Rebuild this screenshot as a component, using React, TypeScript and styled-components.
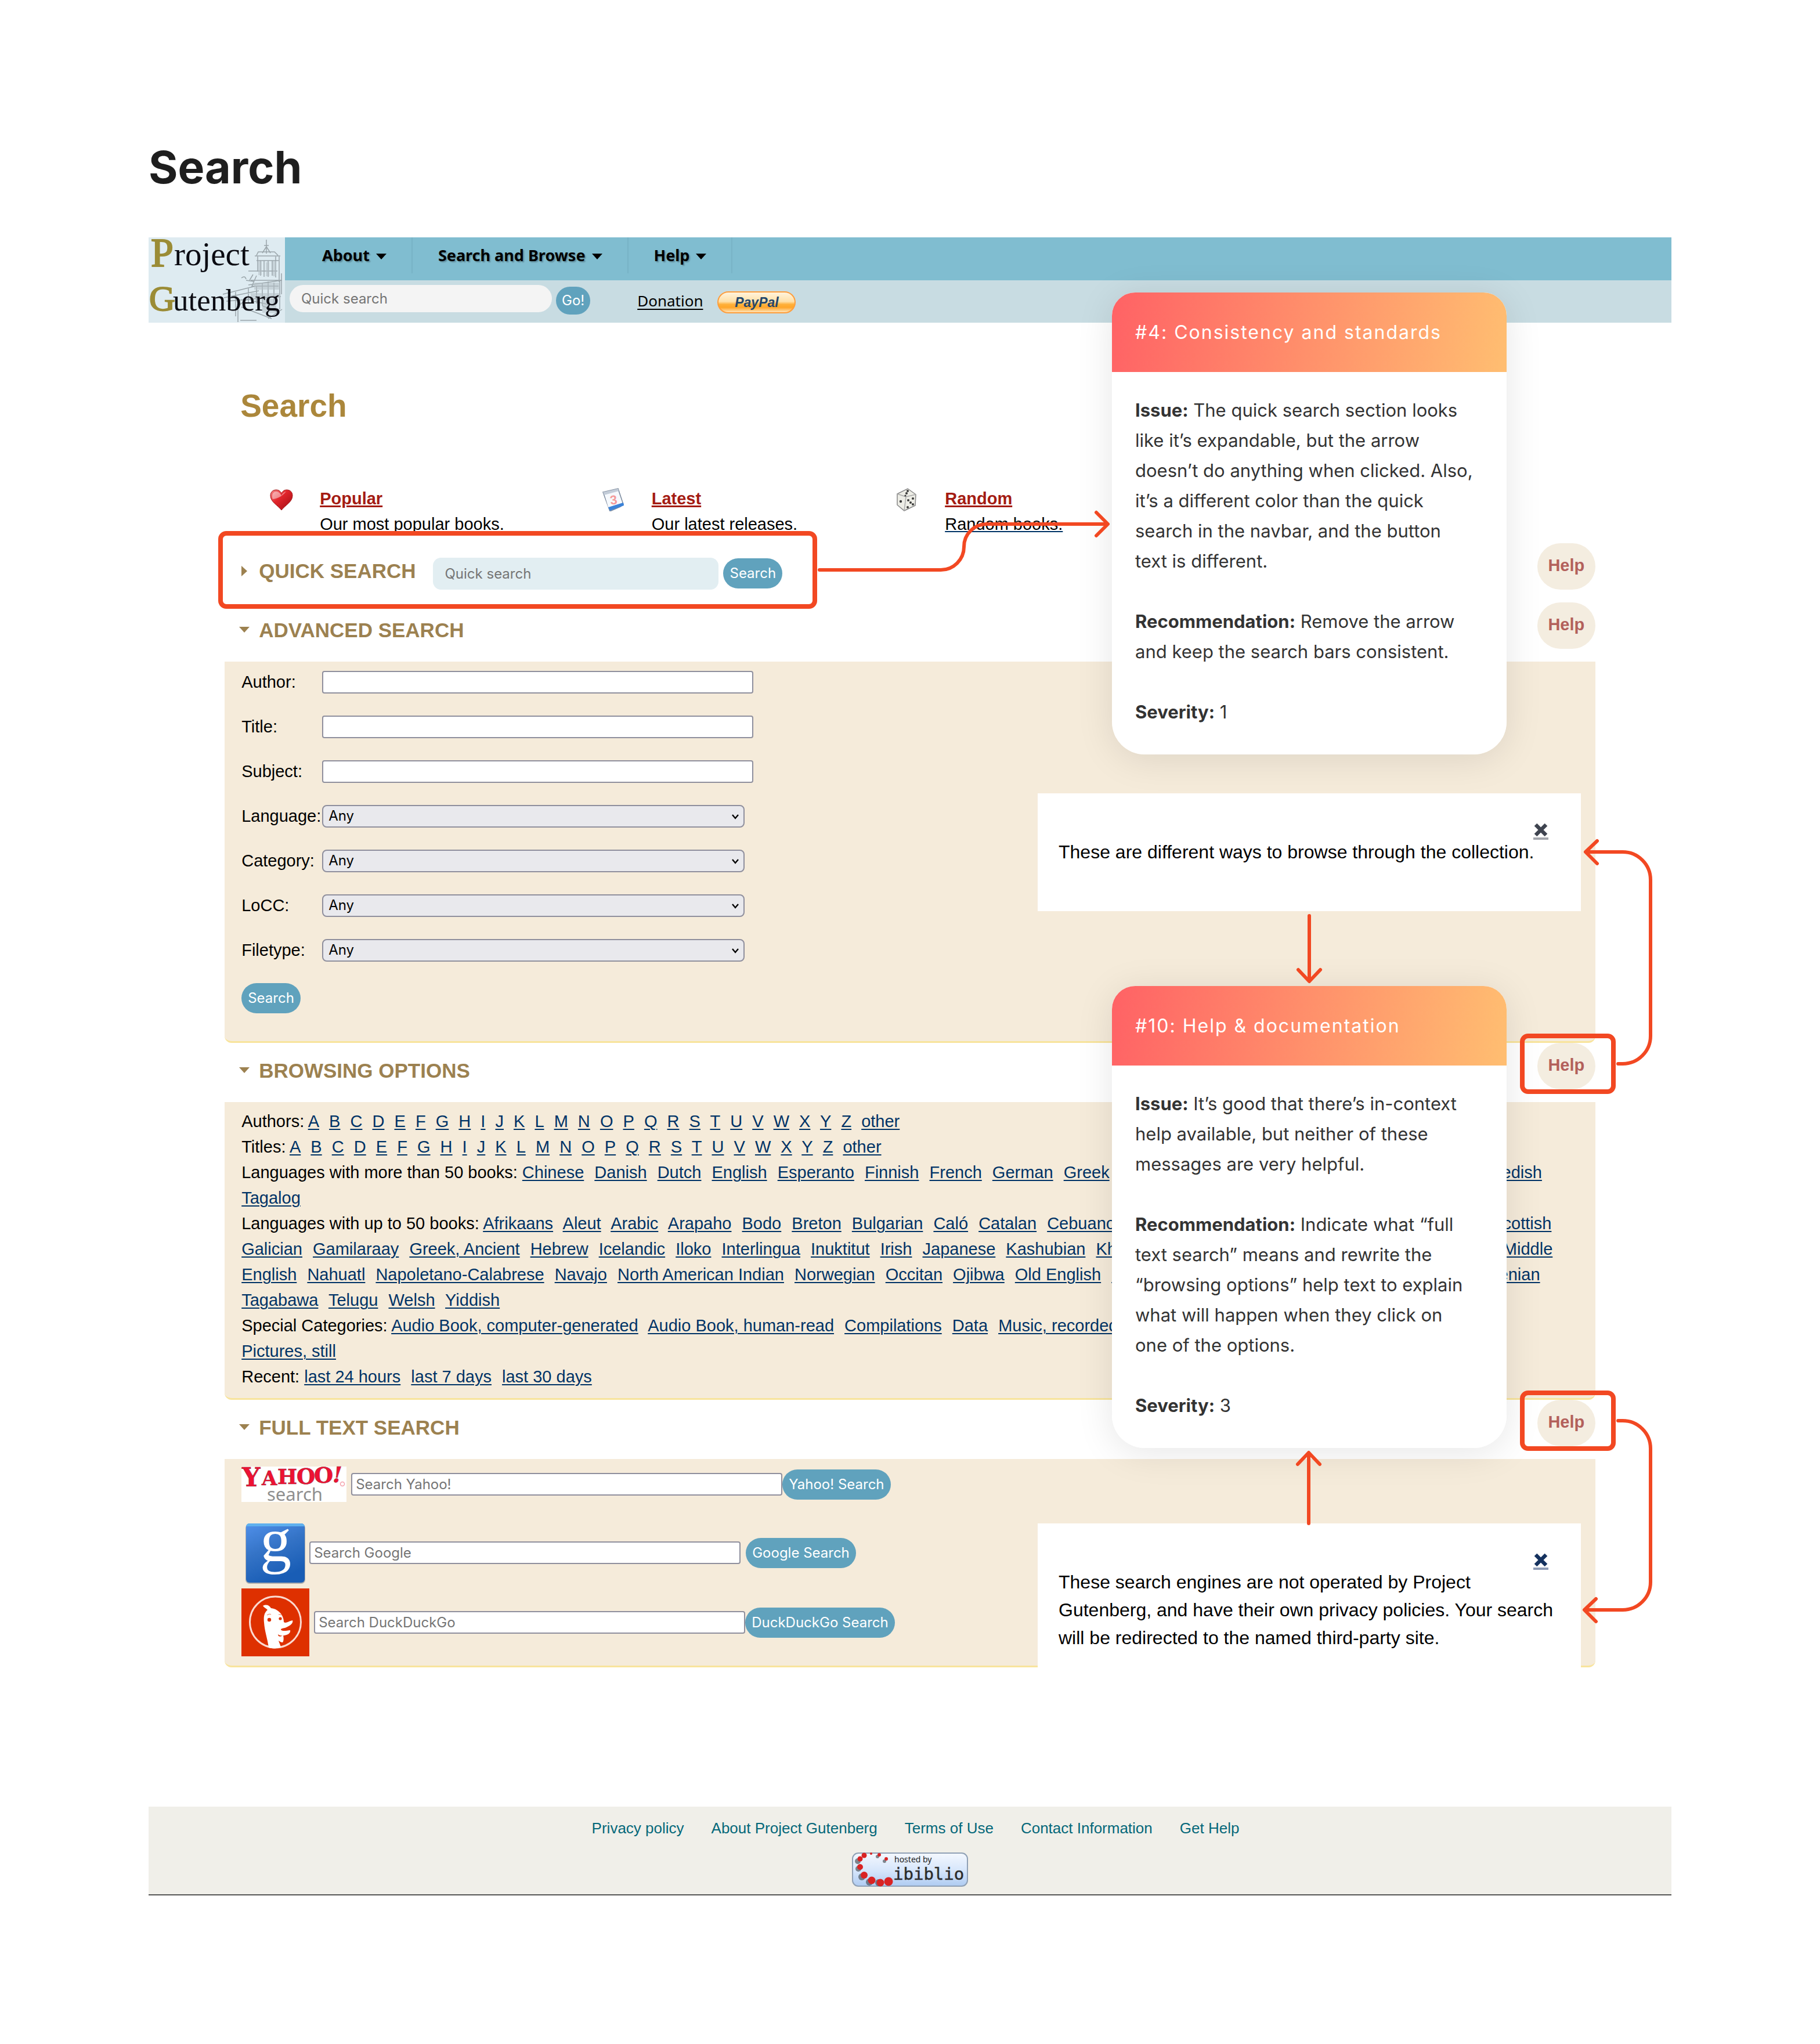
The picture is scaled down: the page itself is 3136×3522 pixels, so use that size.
import React from "react";
import styled, { createGlobalStyle } from "styled-components";

const sans = `"Liberation Sans", Arial, Helvetica, sans-serif`;
const ui = `Inter, "Helvetica Neue", sans-serif`;
const humanist = `"Noto Sans", "Open Sans", sans-serif`;

const RED = "#f24822";
const TEAL = "#60a2bd";
const CREAM = "#f5ebda";
const NAVY = "#003366";

const GlobalStyle = createGlobalStyle`
  *, *::before, *::after { box-sizing: border-box; }
  body { margin: 0; background: #ffffff; }
  button, input, select { font: inherit; margin: 0; }
`;

/* ---------- page ---------- */

const Canvas = styled.main`
  position: relative;
  padding: 240px 256px 256px;
  font-family: ${sans};
  font-size: 29px;
  line-height: 44px;
  color: #000;
`;

const BoardTitle = styled.h1`
  margin: 0 0 73px;
  font-family: ${ui};
  font-size: 77px;
  line-height: 96px;
  font-weight: 700;
  color: #1e1e1e;
`;

/* ---------- site header ---------- */

const SiteHeader = styled.header`
  display: flex;
  height: 147px;
  background: #c8dce2;
`;

const LogoLink = styled.a`
  flex: none;
  display: block;
  width: 235px;
  background: #deebf1;
  svg { display: block; overflow: visible; }
`;

const HeaderMain = styled.div`
  flex: 1;
  display: flex;
  flex-direction: column;
`;

const NavBar = styled.nav`
  display: flex;
  align-items: flex-start;
  height: 74px;
  padding-left: 20px;
  background: #80bdd0;
`;

const NavItem = styled.button`
  display: flex;
  align-items: center;
  gap: 11px;
  height: 62px;
  padding: 0 43px 0 44px;
  border: 0;
  border-right: 2px solid #78b3c6;
  background: none;
  font-family: ${humanist};
  font-size: 27px;
  font-weight: 700;
  color: #000;
  text-shadow: 2px 2px 2px rgba(0, 0, 0, 0.25);
`;

const Caret = styled.span`
  border: 9px solid transparent;
  border-top: 10px solid #000;
  border-bottom: 0;
  margin-top: 4px;
`;

const HeaderTools = styled.div`
  flex: 1;
  display: flex;
  align-items: flex-start;
  padding: 8px;
`;

const HeaderSearch = styled.form`
  display: flex;
  gap: 7px;
  margin-right: 81px;
`;

const PlainInput = styled.input<{ $w: number; $h: number; $bg: string; $r: number }>`
  width: ${(p) => p.$w}px;
  height: ${(p) => p.$h}px;
  padding: 0 20px;
  border: 0;
  border-radius: ${(p) => p.$r}px;
  background: ${(p) => p.$bg};
  font-family: ${ui};
  font-size: 24px;
  color: #222;
  &::placeholder { color: #757575; opacity: 1; }
`;

const PillButton = styled.button`
  flex: none;
  height: 52px;
  padding: 0 11px;
  border: 0;
  border-radius: 26px;
  background: ${TEAL};
  font-family: ${ui};
  font-size: 24px;
  line-height: 28px;
  color: #fff;
`;

const GoButton = styled(PillButton)`
  height: 48px;
  margin-top: 3px;
  padding: 0 10px;
`;

const Donation = styled.a`
  margin: 5px 25px 0 0;
  font-family: ${humanist};
  font-size: 26px;
  color: #000;
  text-underline-offset: 4px;
`;

const PayPalButton = styled.button`
  width: 135px;
  height: 38px;
  margin-top: 11px;
  border: 2px solid #ff9d3c;
  border-radius: 19px;
  background: linear-gradient(#fff3dc 0%, #ffe0a8 46%, #ffb03a 60%, #ffa62a 76%, #ffe3b8 100%);
  font-family: ${sans};
  font-size: 23px;
  line-height: 32px;
  font-weight: 700;
  font-style: italic;
  color: #23466b;
  padding: 0;
`;

/* ---------- content ---------- */

const Content = styled.div`
  margin: 0 5%;
`;

const SiteTitle = styled.h2`
  margin: 111px 0 106px;
  padding-left: 27px;
  font-size: 55px;
  line-height: 64px;
  font-weight: 700;
  color: #ab873b;
`;

const Shelf = styled.ul`
  display: flex;
  gap: 168px;
  margin: 0 0 11px;
  padding: 0 0 0 78px;
  list-style: none;
`;

const ShelfItem = styled.li`
  display: flex;
  gap: 46px;
  svg { flex: none; margin-top: 4px; }
`;

const ShelfLink = styled.a`
  color: #000;
  text-decoration: none;
`;

const ShelfName = styled.span`
  display: block;
  font-weight: 700;
  color: #a41b12;
  text-decoration: underline;
  text-decoration-thickness: 3px;
`;

const ShelfNote = styled.span`
  display: block;
  text-decoration: underline;
  text-decoration-color: ${NAVY};
`;

const SectionBar = styled.div`
  display: flex;
  align-items: center;
  height: 102px;
  padding: 0 0 6px 25px;
`;

const SectionTitle = styled.h3`
  display: flex;
  align-items: center;
  gap: 16px;
  margin: 0;
  font-size: 35px;
  line-height: 44px;
  font-weight: 700;
  color: #9c8150;
  text-transform: uppercase;
  white-space: nowrap;
`;

const QuickForm = styled.form`
  display: flex;
  align-items: center;
  gap: 8px;
  margin: 8px 0 0 30px;
`;

const HelpButton = styled.button`
  align-self: flex-start;
  width: 100px;
  height: 80px;
  margin-left: auto;
  padding: 0 0 4px;
  border: 0;
  border-radius: 40px;
  background: #f4ede0;
  font-size: 29px;
  font-weight: 700;
  color: #b3605b;
`;

const Panel = styled.div<{ $pad: string }>`
  padding: ${(p) => p.$pad};
  background: ${CREAM};
  border-bottom: 3px solid #f8e49c;
  border-radius: 0 0 12px 12px;
`;

const FieldList = styled.div`
  display: grid;
  gap: 38px;
  margin-bottom: 40px;
`;

const FieldRow = styled.div`
  display: grid;
  grid-template-columns: 139px 1fr;
  align-items: center;
  height: 39px;
  white-space: nowrap;
`;

const BoxInput = styled.input`
  width: 743px;
  height: 39px;
  padding: 0 6px;
  border: 2px solid #8f8f9d;
  border-radius: 4px;
  background: #fff;
  font-family: ${ui};
  font-size: 24px;
  line-height: 32px;
  &::placeholder { color: #757575; opacity: 1; }
`;

const SelectWrap = styled.div`
  position: relative;
  width: 728px;
  svg { position: absolute; right: 10px; top: 15px; pointer-events: none; }
`;

const SelectBox = styled.select`
  display: block;
  appearance: none;
  width: 100%;
  height: 39px;
  padding: 0 9px;
  border: 2px solid #8f8f9d;
  border-radius: 8px;
  background: #e9e9ed;
  font-family: ${ui};
  font-size: 24px;
  line-height: 32px;
  color: #000;
`;

const BrowseLine = styled.p`
  margin: 0;
`;

const BrowseLink = styled.a<{ $gap: number }>`
  margin-right: ${(p) => p.$gap}px;
  color: ${NAVY};
  text-decoration-thickness: 2px;
  text-underline-offset: 3px;
`;

const EngineRow = styled.form<{ $h: number; $after: number }>`
  display: flex;
  align-items: center;
  height: ${(p) => p.$h}px;
  margin-bottom: ${(p) => p.$after}px;
`;

const EngineLogo = styled.span<{ $gap: number }>`
  flex: none;
  display: block;
  margin-right: ${(p) => p.$gap}px;
  svg { display: block; overflow: visible; }
`;

const EngineSubmit = styled(PillButton)<{ $gap: number }>`
  margin-left: ${(p) => p.$gap}px;
`;

/* ---------- footer ---------- */

const Footer = styled.footer`
  display: flex;
  flex-direction: column;
  align-items: center;
  gap: 26px;
  margin-top: 240px;
  padding: 21px 0 13px;
  background: #f0efe9;
  border-bottom: 2px solid #555;
`;

const FooterNav = styled.nav`
  display: flex;
  gap: 47px;
  padding-left: 19px;
  line-height: 32px;
`;

const FooterLink = styled.a`
  font-size: 26px;
  color: #05687a;
  text-decoration: none;
`;

const Badge = styled.a`
  display: block;
  svg { display: block; }
`;

/* ---------- annotations ---------- */

const Note = styled.article<{ $top: number }>`
  position: absolute;
  right: 540px;
  top: ${(p) => p.$top}px;
  width: 680px;
  overflow: hidden;
  border-radius: 40px 40px 56px 56px;
  background: #fff;
  font-family: ${ui};
  font-size: 31px;
  line-height: 52px;
  color: #333;
`;

const NoteShadow = styled.div<{ $top: number }>`
  position: absolute;
  right: 540px;
  top: ${(p) => p.$top}px;
  width: 680px;
  height: 796px;
  border-radius: 40px 40px 56px 56px;
  box-shadow: 0 8px 64px rgba(0, 0, 0, 0.1);
`;

const NoteHead = styled.h4`
  margin: 0;
  padding: 43px 40px 42px;
  background: linear-gradient(98deg, #ff6265 0%, #ffbe71 100%);
  font-size: 32px;
  line-height: 52px;
  font-weight: 400;
  letter-spacing: 2px;
  color: #fff;
`;

const NoteBody = styled.div`
  display: grid;
  gap: 52px;
  padding: 40px 54px 47px 40px;
  p { margin: 0; }
`;

const Popup = styled.aside<{ $top: number; $h: number }>`
  position: absolute;
  left: 1788px;
  top: ${(p) => p.$top}px;
  width: 936px;
  height: ${(p) => p.$h}px;
  padding: 43px 36px 30px;
  background: #fff;
  font-size: 32px;
  line-height: 48px;
  p { margin: 0; }
`;

const CloseButton = styled.button<{ $color: string; $line: string }>`
  display: block;
  width: 26px;
  height: 37px;
  margin: 0 20px -3px auto;
  padding: 0;
  border: 0;
  border-bottom: 4px solid ${(p) => p.$line};
  background: none;
  color: ${(p) => p.$color};
  svg { display: block; margin-top: 6px; }
`;

const Highlight = styled.div<{ $x: number; $y: number; $w: number; $h: number }>`
  position: absolute;
  left: ${(p) => p.$x}px;
  top: ${(p) => p.$y}px;
  width: ${(p) => p.$w}px;
  height: ${(p) => p.$h}px;
  border: 8px solid ${RED};
  border-radius: 14px;
  pointer-events: none;
`;

const Arrows = styled.svg`
  position: absolute;
  left: 0;
  top: 0;
  width: 100%;
  height: 100%;
  pointer-events: none;
`;

/* ---------- drawings ---------- */

const GutenbergLogo = () => (
  <svg width="235" height="147" viewBox="0 0 235 147" role="img" aria-label="Project Gutenberg">
    <g fill="none" stroke="#9aa5aa" strokeWidth="1.5">
      <path d="M203 4v24M199 14h8M196 27l7-11 7 11M186 31l3-6h28l6 6M183 32h44M186 40h38M188 33v26M193 40v26M199 40v28M206 40v28M213 40v26M219 33v36M225 33v44M229 62v36" />
      <path d="M172 58h50M180 64l-6 10M176 74h52M186 66l-8 18h46M160 70q6-5 8 2M168 74l14 2M172 82l58-8M186 84v30M196 78v40M206 76v42M216 78v40M226 74v50" />
      <path d="M128 98l56-14M130 104l60-12M134 110l94-8M150 92v44M172 88v26M182 110l34 8M196 118l30 12M160 120l52 20M154 146v-28M154 118l20-14M206 140l24-16M158 143h28" />
    </g>
    <g fill="#b4bfc4" opacity="0.55">
      <path d="M189 41h6v24h-6zM202 43h6v24h-6zM214 41h6v26h-6zM182 78h44v12h-44zM176 96h50v8h-50zM196 106h24v24h-24z" />
    </g>
    <g fontFamily='"Liberation Serif", "Times New Roman", serif'>
      <text x="4" y="50" fontSize="70" fill="#9b8c36" stroke="#9b8c36" strokeWidth="2">P</text>
      <text x="44" y="48" fontSize="57" fill="#0b0b12">roject</text>
      <text x="1" y="126" fontSize="62" fill="#9b8c36" stroke="#9b8c36" strokeWidth="2">G</text>
      <text x="42" y="126" fontSize="53" fill="#0b0b12">utenberg</text>
    </g>
  </svg>
);

const HeartIcon = () => (
  <svg width="40" height="40" viewBox="0 0 40 40" aria-hidden="true">
    <defs>
      <linearGradient id="heart" x1="0" y1="0" x2="1" y2="1">
        <stop offset="0" stopColor="#f58a8a" />
        <stop offset="0.4" stopColor="#e3262c" />
        <stop offset="1" stopColor="#9c0a10" />
      </linearGradient>
    </defs>
    <path d="M20 38C14 30 1 24 1 13 1 7 5 3 11 3c4 0 7 2 9 6 2-4 5-6 9-6 6 0 10 4 10 10 0 11-13 17-19 25z" fill="url(#heart)" stroke="#a31c1c" strokeWidth="1" />
    <path d="M4 14c0-5 3-8 7-8 4 0 7 3 9 7 2-4 4-6 8-7-6 7-13 12-23 13-1-2-1-3-1-5z" fill="#fff" opacity="0.45" />
  </svg>
);

const CalendarIcon = () => (
  <svg width="40" height="40" viewBox="0 0 40 40" aria-hidden="true">
    <path d="M2 7L28 1l9 27-5 4-18 8z" fill="#e9f1fa" stroke="#7b899c" strokeWidth="1.5" />
    <path d="M2 7L28 1l1 4L4 12z" fill="#c3ccd8" />
    <path d="M11 33l26-8 1 5-24 9z" fill="#3b82d8" />
    <path d="M5 12l23-6 7 19-24 8z" fill="#f6f9fd" />
    <text x="14" y="28" fontFamily={sans} fontSize="22" fontWeight="700" fill="#f39a9a" transform="rotate(-8 20 20)">3</text>
  </svg>
);

const DiceIcon = () => (
  <svg width="40" height="40" viewBox="0 0 40 40" aria-hidden="true">
    <path d="M22 1l14 10-1 19-19 9L4 29 4 10z" fill="#ededE6" stroke="#878787" strokeWidth="1.5" />
    <path d="M4 10l15 5 17-4M19 15l-3 24" fill="none" stroke="#a9a9a9" strokeWidth="1.5" />
    <g fill="#3b3b3b">
      <circle cx="22" cy="5" r="2" /><circle cx="20" cy="9" r="2" /><circle cx="18" cy="13" r="1.6" />
      <circle cx="10" cy="23" r="2.2" />
      <circle cx="23" cy="21" r="2" /><circle cx="31" cy="18" r="2" /><circle cx="27" cy="25" r="2" />
      <circle cx="22" cy="33" r="2" /><circle cx="31" cy="28" r="2" />
    </g>
  </svg>
);

const Marker = ({ open }: { open: boolean }) => (
  <svg width="18" height="18" viewBox="0 0 18 18" aria-hidden="true">
    <path d={open ? "M0 3h18l-9 10z" : "M4 0v18l10-9z"} fill="currentColor" />
  </svg>
);

const Chevron = () => (
  <svg width="12" height="10" viewBox="0 0 12 10" aria-hidden="true">
    <path d="M1 2l5 6 5-6" fill="none" stroke="#000" strokeWidth="2.4" />
  </svg>
);

const Cross = () => (
  <svg width="26" height="24" viewBox="0 0 26 24" aria-hidden="true">
    <path d="M4 3l18 18M22 3L4 21" stroke="currentColor" strokeWidth="6.5" />
  </svg>
);

const YahooLogo = () => (
  <svg width="181" height="61" viewBox="0 0 181 61" role="img" aria-label="Yahoo! search">
    <rect width="181" height="61" fill="#fff" />
    <g fontFamily='"DejaVu Serif", "Liberation Serif", serif' fontWeight="700" fill="#ee1133" stroke="#a02a3a" strokeWidth="0.6">
      <text x="1" y="34" fontSize="44">Y</text>
      <text x="35" y="32" fontSize="34">A</text>
      <text x="62" y="30" fontSize="36">H</text>
      <text x="95" y="30" fontSize="37">O</text>
      <text x="125" y="28" fontSize="38">O</text>
      <text x="157" y="27" fontSize="38" fontStyle="italic">!</text>
    </g>
    <circle cx="174" cy="30" r="3.5" fill="none" stroke="#f5a0aa" strokeWidth="1.5" />
    <text x="44" y="59" fontFamily={humanist} fontSize="31" fill="#8f8f8f">search</text>
  </svg>
);

const GoogleLogo = () => (
  <svg width="117" height="117" viewBox="0 0 117 117" role="img" aria-label="Google">
    <defs>
      <linearGradient id="goog" x1="0" y1="0" x2="0.4" y2="1">
        <stop offset="0" stopColor="#5090ea" />
        <stop offset="0.5" stopColor="#3473c6" />
        <stop offset="1" stopColor="#195db5" />
      </linearGradient>
    </defs>
    <rect x="7" y="9" width="103" height="103" rx="7" fill="#7b848f" opacity="0.6" />
    <rect x="8" y="8" width="101" height="102" rx="6" fill="url(#goog)" />
    <path d="M14 8h89q5 0 6 5H8q1-5 6-5z" fill="#5fb0ee" />
    <text x="32" y="73" fontFamily='"Liberation Serif", "Times New Roman", serif' fontSize="108" fill="#fff">g</text>
  </svg>
);

const DuckLogo = () => (
  <svg width="117" height="117" viewBox="0 0 117 117" role="img" aria-label="DuckDuckGo">
    <rect width="117" height="117" fill="#de3000" />
    <circle cx="58.500" cy="58" r="44" fill="none" stroke="#fbd9cf" strokeWidth="3" />
    <path d="M37 30c6-3 11-1 14 4 8 1 14 5 18 11 3 5 4 9 4 13 4 3 9-2 15-3 2 5-5 10-13 13-4 1-7 1-7 3 1 3 9 2 16 1 1 5-4 8-10 9-5 1-9 0-11-2 0 4 3 5 9 2 1 4 1 10-1 12-3 0-5-2-7-3 1 4 3 7 4 11-7 3-15 3-21 1-2-15-7-28-8-43-1-10 0-17 6-22-3-3-6-4-8-7z" fill="#fff" />
    <circle cx="48" cy="54" r="3.200" fill="#de3000" />
    <circle cx="67" cy="52" r="2.600" fill="#de3000" />
    <path d="M44 46q4-3 7-1M64 45q3-1 5 1" fill="none" stroke="#f0a08c" strokeWidth="1.500" />
  </svg>
);

const IbiblioBadge = () => (
  <svg width="200" height="59" viewBox="0 0 200 59" role="img" aria-label="hosted by ibiblio">
    <defs>
      <linearGradient id="ibib" x1="0" y1="0" x2="0" y2="1">
        <stop offset="0" stopColor="#f4f8fe" />
        <stop offset="0.55" stopColor="#d5e5fb" />
        <stop offset="1" stopColor="#aecbf1" />
      </linearGradient>
    </defs>
    <rect x="1" y="1" width="198" height="57" rx="10" fill="url(#ibib)" stroke="#8fa0b5" strokeWidth="2" />
    <g fill="#3a3f45" opacity="0.6">
      <circle cx="10" cy="15" r="5" /><circle cx="11" cy="28" r="5" /><circle cx="17" cy="42" r="6" />
      <circle cx="30" cy="51" r="6" /><circle cx="46" cy="52" r="6" /><circle cx="56" cy="15" r="3" /><circle cx="44" cy="7" r="3" />
    </g>
    <g fill="#d92323">
      <circle cx="21" cy="5" r="4.500" /><circle cx="14" cy="11" r="4.500" /><circle cx="14" cy="25" r="5" />
      <circle cx="21" cy="39" r="6" /><circle cx="34" cy="48" r="6.500" /><circle cx="49" cy="52" r="6.500" />
      <circle cx="63" cy="50" r="7.500" /><circle cx="59" cy="11" r="3" /><circle cx="47" cy="4" r="3" /><circle cx="33" cy="2" r="2" />
    </g>
    <text x="73" y="17" fontFamily={humanist} fontSize="14" fill="#222">hosted by</text>
    <text x="71" y="47" fontFamily='"DejaVu Sans Mono", "Liberation Mono", monospace' fontSize="29" fill="#2b2b2b" stroke="#2b2b2b" strokeWidth="0.500">ibiblio</text>
  </svg>
);

/* ---------- data ---------- */

const letters = [..."ABCDEFGHIJKLMNOPQRSTUVWXYZ", "other"];

const browse: { label: string; links: string[]; gap: number }[] = [
  { label: "Authors:", links: letters, gap: 9 },
  { label: "Titles:", links: letters, gap: 9 },
  {
    label: "Languages with more than 50 books:",
    gap: 10,
    links: ["Chinese", "Danish", "Dutch", "English", "Esperanto", "Finnish", "French", "German", "Greek", "Hungarian", "Italian", "Latin", "Portuguese", "Spanish", "Swedish", "Tagalog"],
  },
  {
    label: "Languages with up to 50 books:",
    gap: 10,
    links: ["Afrikaans", "Aleut", "Arabic", "Arapaho", "Bodo", "Breton", "Bulgarian", "Caló", "Catalan", "Cebuano", "Czech", "Estonian", "Farsi", "Frisian", "Friulian", "Gaelic, Scottish", "Galician", "Gamilaraay", "Greek, Ancient", "Hebrew", "Icelandic", "Iloko", "Interlingua", "Inuktitut", "Irish", "Japanese", "Kashubian", "Khasi", "Korean", "Lithuanian", "Maori", "Mayan Languages", "Middle English", "Nahuatl", "Napoletano-Calabrese", "Navajo", "North American Indian", "Norwegian", "Occitan", "Ojibwa", "Old English", "Polish", "Romanian", "Russian", "Sanskrit", "Serbian", "Slovenian", "Tagabawa", "Telugu", "Welsh", "Yiddish"],
  },
  {
    label: "Special Categories:",
    gap: 10,
    links: ["Audio Book, computer-generated", "Audio Book, human-read", "Compilations", "Data", "Music, recorded", "Music, Sheet", "Other recordings", "Pictures, moving", "Pictures, still"],
  },
  { label: "Recent:", links: ["last 24 hours", "last 7 days", "last 30 days"], gap: 10 },
];

const shelf = [
  { name: "Popular", note: "Our most popular books.", icon: <HeartIcon /> },
  { name: "Latest", note: "Our latest releases.", icon: <CalendarIcon /> },
  { name: "Random", note: "Random books.", icon: <DiceIcon /> },
];

const engines = [
  { name: "Yahoo!", logo: <YahooLogo />, h: 61, after: 29, logoGap: 8, gap: 0 },
  { name: "Google", logo: <GoogleLogo />, h: 117, after: 3, logoGap: 0, gap: 9 },
  { name: "DuckDuckGo", logo: <DuckLogo />, h: 117, after: 0, logoGap: 8, gap: 0 },
];

const stay = (e: React.FormEvent) => e.preventDefault();

const Section = ({ title, open, children }: { title: string; open: boolean; children?: React.ReactNode }) => (
  <SectionBar>
    <SectionTitle>
      <Marker open={open} />
      {title}
    </SectionTitle>
    {children}
    <HelpButton type="button">Help</HelpButton>
  </SectionBar>
);

export default function App() {
  return (
    <>
      <GlobalStyle />
      <Canvas>
        <BoardTitle>Search</BoardTitle>

        <SiteHeader>
          <LogoLink href="#home"><GutenbergLogo /></LogoLink>
          <HeaderMain>
            <NavBar>
              {["About", "Search and Browse", "Help"].map((item) => (
                <NavItem key={item} type="button">{item}<Caret /></NavItem>
              ))}
            </NavBar>
            <HeaderTools>
              <HeaderSearch onSubmit={stay}>
                <PlainInput $w={452} $h={47} $r={24} $bg="#f4f4f4" aria-label="Site quick search" placeholder="Quick search" />
                <GoButton>Go!</GoButton>
              </HeaderSearch>
              <Donation href="#donate">Donation</Donation>
              <PayPalButton type="button">PayPal</PayPalButton>
            </HeaderTools>
          </HeaderMain>
        </SiteHeader>

        <Content>
          <SiteTitle>Search</SiteTitle>
          <Shelf>
            {shelf.map((s) => (
              <ShelfItem key={s.name}>
                {s.icon}
                <ShelfLink href={`#${s.name.toLowerCase()}`}>
                  <ShelfName>{s.name}</ShelfName>
                  <ShelfNote>{s.note}</ShelfNote>
                </ShelfLink>
              </ShelfItem>
            ))}
          </Shelf>

          <Section title="Quick Search" open={false}>
            <QuickForm onSubmit={stay}>
              <PlainInput $w={492} $h={55} $r={14} $bg="#e2eef2" aria-label="Quick search" placeholder="Quick search" />
              <PillButton>Search</PillButton>
            </QuickForm>
          </Section>

          <Section title="Advanced Search" open />
          <Panel $pad="13px 29px 48px">
            <form onSubmit={stay}>
              <FieldList>
                {["Author", "Title", "Subject"].map((f) => (
                  <FieldRow key={f}>
                    <label htmlFor={f}>{f}:</label>
                    <BoxInput id={f} />
                  </FieldRow>
                ))}
                {["Language", "Category", "LoCC", "Filetype"].map((f) => (
                  <FieldRow key={f}>
                    <label htmlFor={f}>{f}:</label>
                    <SelectWrap>
                      <SelectBox id={f}><option>Any</option></SelectBox>
                      <Chevron />
                    </SelectWrap>
                  </FieldRow>
                ))}
              </FieldList>
              <PillButton>Search</PillButton>
            </form>
          </Panel>

          <Section title="Browsing Options" open />
          <Panel $pad="11px 56px 15px 29px">
            {browse.map((b) => (
              <BrowseLine key={b.label}>
                {b.label}{" "}
                {b.links.map((l) => (
                  <React.Fragment key={l}>
                    <BrowseLink $gap={b.gap} href="#browse">{l}</BrowseLink>{" "}
                  </React.Fragment>
                ))}
              </BrowseLine>
            ))}
          </Panel>

          <Section title="Full Text Search" open />
          <Panel $pad="13px 29px 16px">
            {engines.map((e) => (
              <EngineRow key={e.name} $h={e.h} $after={e.after} onSubmit={stay}>
                <EngineLogo $gap={e.logoGap}>{e.logo}</EngineLogo>
                <BoxInput aria-label={`Search ${e.name}`} placeholder={`Search ${e.name}`} />
                <EngineSubmit $gap={e.gap}>{e.name} Search</EngineSubmit>
              </EngineRow>
            ))}
          </Panel>
        </Content>

        <Footer>
          <FooterNav>
            {["Privacy policy", "About Project Gutenberg", "Terms of Use", "Contact Information", "Get Help"].map((l) => (
              <FooterLink key={l} href="#footer">{l}</FooterLink>
            ))}
          </FooterNav>
          <Badge href="#ibiblio"><IbiblioBadge /></Badge>
        </Footer>

        <NoteShadow $top={504} />
        <NoteShadow $top={1699} />

        <Popup $top={1367} $h={203}>
          <CloseButton type="button" aria-label="Close" $color="#3f4450" $line="#a3a6ac"><Cross /></CloseButton>
          <p>These are different ways to browse through the collection.</p>
        </Popup>
        <Popup $top={2625} $h={248}>
          <CloseButton type="button" aria-label="Close" $color="#15325f" $line="#8d9bb5"><Cross /></CloseButton>
          <p>These search engines are not operated by Project Gutenberg, and have their own privacy policies. Your search will be redirected to the named third-party site.</p>
        </Popup>

        <Note $top={504}>
          <NoteHead>#4: Consistency and standards</NoteHead>
          <NoteBody>
            <p><strong>Issue:</strong> The quick search section looks like it’s expandable, but the arrow doesn’t do anything when clicked. Also, it’s a different color than the quick search in the navbar, and the button text is different.</p>
            <p><strong>Recommendation:</strong> Remove the arrow and keep the search bars consistent.</p>
            <p><strong>Severity:</strong> 1</p>
          </NoteBody>
        </Note>
        <Note $top={1699}>
          <NoteHead>#10: Help &amp; documentation</NoteHead>
          <NoteBody>
            <p><strong>Issue:</strong> It’s good that there’s in-context help available, but neither of these messages are very helpful.</p>
            <p><strong>Recommendation:</strong> Indicate what “full text search” means and rewrite the “browsing options” help text to explain what will happen when they click on one of the options.</p>
            <p><strong>Severity:</strong> 3</p>
          </NoteBody>
        </Note>

        <Highlight $x={376} $y={915} $w={1032} $h={134} />
        <Highlight $x={2619} $y={1781} $w={165} $h={104} />
        <Highlight $x={2619} $y={2396} $w={165} $h={104} />

        <Arrows aria-hidden="true">
          <g fill="none" stroke={RED} strokeWidth="6" strokeLinecap="round" strokeLinejoin="round">
            <path d="M1412 982H1621A40 40 0 0 0 1661 942A39 39 0 0 1 1700 903H1907M1889 883L1909 903L1889 923" />
            <path d="M2788 1833H2796A48 48 0 0 0 2844 1785V1516A48 48 0 0 0 2796 1468H2733M2752 1449L2732 1468L2752 1488" />
            <path d="M2256 1578V1689M2237 1671L2256 1691L2275 1671" />
            <path d="M2788 2448H2796A48 48 0 0 1 2844 2496V2726A48 48 0 0 1 2796 2774H2731M2750 2755L2730 2774L2750 2794" />
            <path d="M2255 2625V2505M2236 2523L2255 2503L2274 2523" />
          </g>
        </Arrows>
      </Canvas>
    </>
  );
}
